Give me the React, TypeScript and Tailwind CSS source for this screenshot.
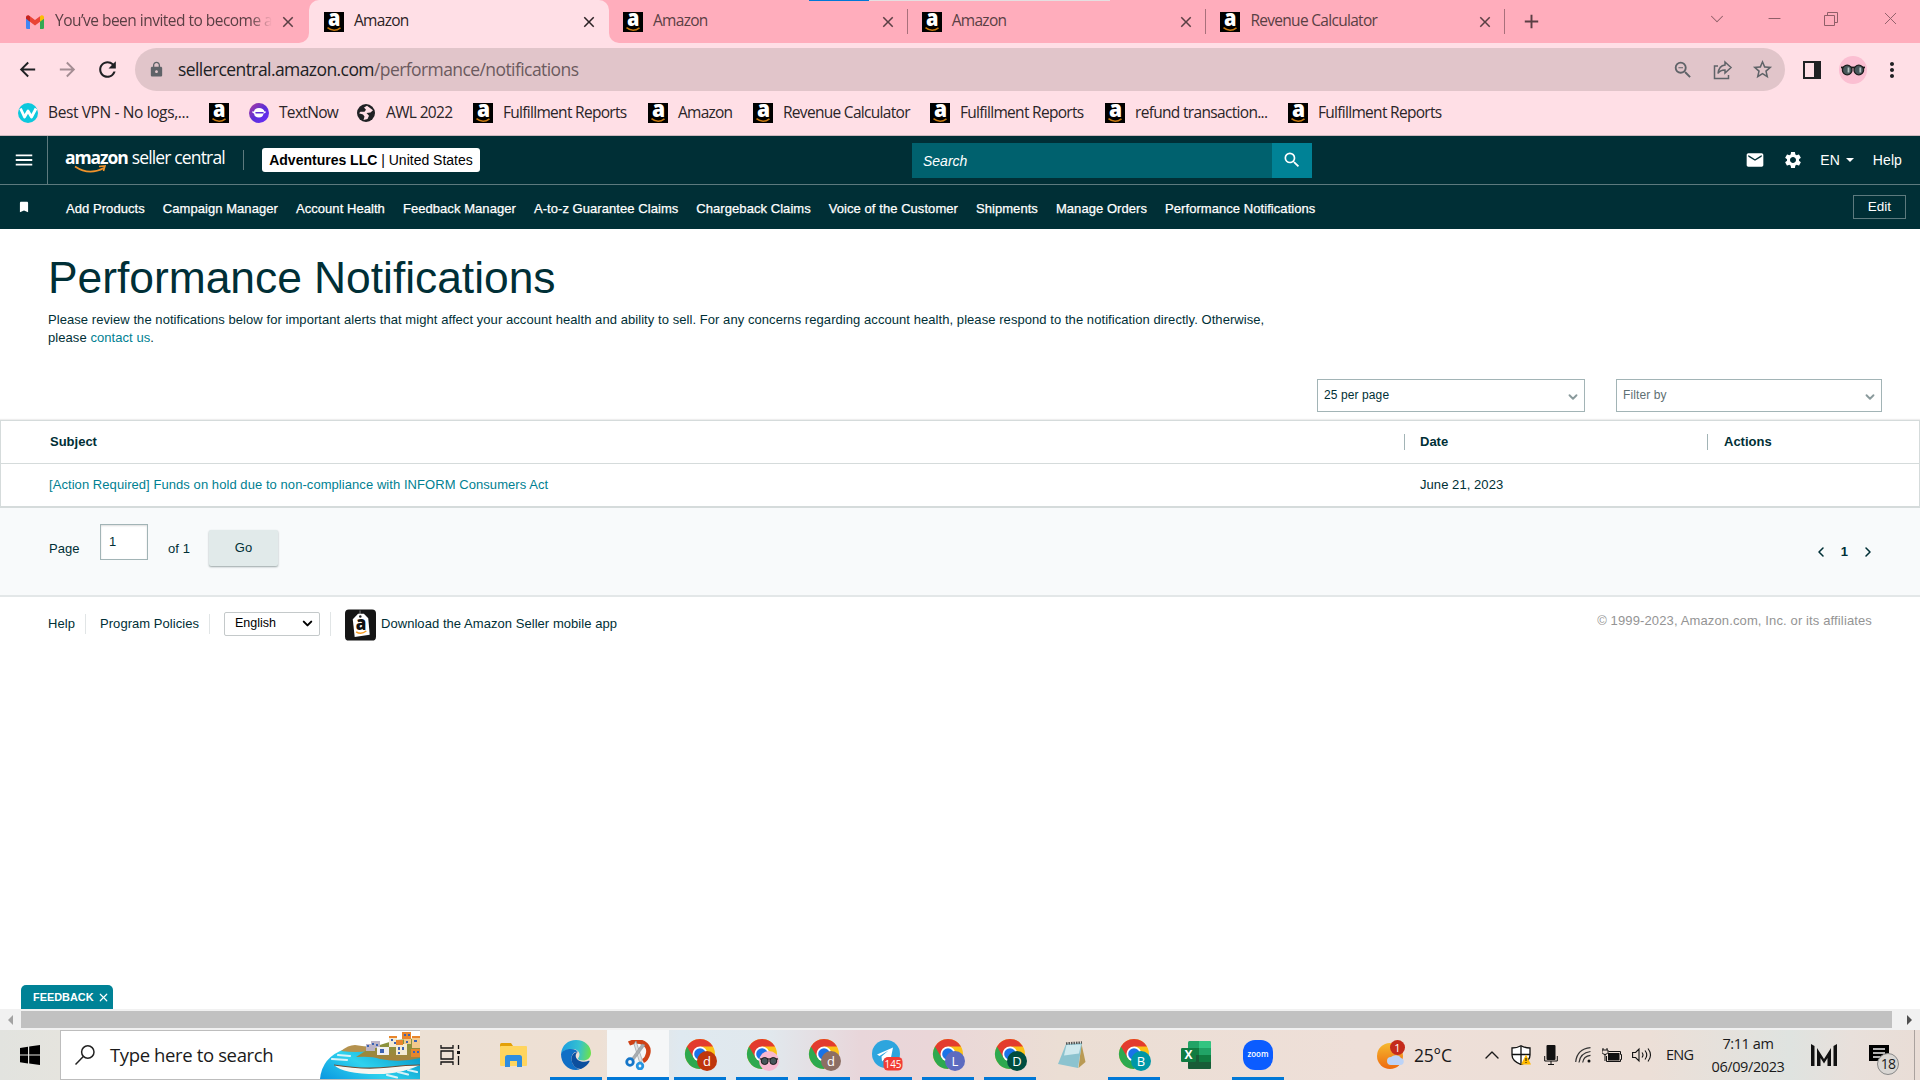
import React from 'react';
import {
  MdArrowBack, MdArrowForward, MdRefresh, MdLock, MdZoomOut, MdStarBorder,
  MdClose, MdAdd, MdMoreVert, MdMail, MdSettings, MdBookmark, MdMenu, MdSearch,
} from 'react-icons/md';
import { ChevronDown, ChevronLeft, ChevronRight, ChevronUp, Minus, X } from 'lucide-react';

const AmazonIcon = () => (
  <svg viewBox="0 0 20 20" className="size-5 shrink-0">
    <rect width="20" height="20" fill="#000" />
    <text x="4" y="14.300" fontFamily="Open Sans" fontWeight="800" fontSize="23" textLength="12.500" lengthAdjust="spacingAndGlyphs" fill="#fff">a</text>
    <path d="M3.500 15.700Q10 20.800 16.500 15.800" fill="none" stroke="#c87a12" strokeWidth="1.600" />
  </svg>
);

const GmailIcon = () => (
  <svg viewBox="0 0 18 14" className="w-[18px] h-[14px] shrink-0">
    <path d="M0 2v10.700a1.300 1.300 0 0 0 1.300 1.300H4V6z" fill="#4285f4" />
    <path d="M18 2v10.700a1.300 1.300 0 0 1-1.300 1.300H14V6z" fill="#34a853" />
    <path d="M4 1.200v5.500l5 3.700 5-3.700V1.200L9 5z" fill="#ea4335" />
    <path d="M0 2.200V3.700l4 3V1.200L3.300.7C1.900-.4 0 .5 0 2.200z" fill="#c5221f" />
    <path d="M18 2.200V3.700l-4 3V1.200l.7-.5C16.100-.4 18 .5 18 2.200z" fill="#fbbc04" />
  </svg>
);

const WindscribeIcon = () => (
  <svg viewBox="0 0 20 20" className="size-5 shrink-0">
    <circle cx="10" cy="10" r="10" fill="#0cc8dd" />
    <path d="M2.500 5.500l4 8.500L10 8l3.500 6L18 5.500" fill="none" stroke="#fff" strokeWidth="2.800" strokeLinejoin="round" />
  </svg>
);

const TextNowIcon = () => (
  <svg viewBox="0 0 20 20" className="size-5 shrink-0">
    <defs>
      <linearGradient id="tn" x1="0" y1="0" x2="1" y2="1">
        <stop offset="0" stopColor="#b03a9a" />
        <stop offset=".5" stopColor="#5c2fd6" />
        <stop offset="1" stopColor="#6a2cff" />
      </linearGradient>
    </defs>
    <circle cx="10" cy="10" r="10" fill="url(#tn)" />
    <path d="M5 8.500q.5-3.500 5-3.500t5.500 3.500H17q0 2-2.500 2-.5 4-4.500 4-4.500 0-5-4Q3 10 3 8.500z" fill="#fff" />
    <path d="M7 9.800h7" stroke="#5c2fd6" strokeWidth="1.500" strokeLinecap="round" />
  </svg>
);

const GlobeIcon = () => (
  <svg viewBox="0 0 18 18" className="size-[18px] mx-px shrink-0">
    <circle cx="9" cy="9" r="9" fill="#202124" />
    <path d="M10 1.800l-3 1.700 2 2.200-1.500 2H3.500L2 9.200l4 1.300 1.500 2-1 3.500 4-1 1.500-3.200L9.500 9l4-.6 2.500-2.200z" fill="#ffdfe6" />
  </svg>
);

const tabs = ['Amazon', 'Amazon', 'Revenue Calculator'];

const TabStrip = () => (
  <div className="relative h-[43px] bg-[#ffdfe6]">
    <div className="h-[43px] flex items-center text-[15.5px] text-[#5a3f44]">
      <div className="w-[309px] h-[43px] pl-[26px] pr-[12px] flex items-center shrink-0 bg-[#ffadbc] rounded-br-[10px]">
        <GmailIcon />
        <span className="ml-[11px] pb-px w-[219px] overflow-hidden whitespace-nowrap tracking-[-0.520px] [mask-image:linear-gradient(to_right,black_90%,transparent)]">
          You’ve been invited to become an
        </span>
        <MdClose size={18} className="ml-[7px] shrink-0" />
      </div>
      <div className="h-[43px] bg-[#ffadbc] shrink-0">
        <div className="w-[300px] h-[43px] pl-[15px] flex items-center bg-[#ffdfe6] rounded-t-[10px] text-[#2b2225]">
          <AmazonIcon />
          <span className="ml-[10px] pb-px flex-1 tracking-[-0.700px]">Amazon</span>
          <MdClose size={18} className="mr-[11px]" />
        </div>
      </div>
      <div className="flex-1 h-[43px] bg-[#ffadbc] rounded-bl-[10px] flex items-center">
        {tabs.map((title, i) => (
          <div key={i} className="w-[298.700px] h-[43px] pl-[14px] flex items-center shrink-0">
            <AmazonIcon />
            <span className="ml-[10px] pb-px flex-1 tracking-[-0.700px]">{title}</span>
            <MdClose size={18} className="mr-[10px]" />
            <div className="w-px h-[25px] bg-[#a8707b]" />
          </div>
        ))}
        <MdAdd size={23} className="ml-[15px]" />
        <div className="ml-auto flex items-center pr-[19px] pb-[6px] text-[#8f5f68]">
          <ChevronDown size={22} strokeWidth={1.100} className="mr-[37px]" />
          <Minus size={19} strokeWidth={1.300} className="mr-[40px]" />
          <svg viewBox="0 0 14 14" className="w-[14px] h-[14px] mr-[42px]" fill="none" stroke="currentColor">
            <path d="M.5 3.500h10v10H.5zM3.500 3.500V.5h10v10h-3" />
          </svg>
          <X size={21} strokeWidth={1.100} />
        </div>
      </div>
    </div>
    <div className="absolute top-0 left-[809px] w-[301px] h-px bg-[#e5dfe1] flex">
      <div className="w-[60px] h-px bg-[#0078d7]" />
    </div>
  </div>
);

const Sunglasses = () => (
  <svg viewBox="0 0 28 28" className="size-7">
    <circle cx="14" cy="14" r="14" fill="#fbbfd2" />
    <path d="M2 11.500h24" stroke="#1c1c1c" strokeWidth="1.800" />
    <circle cx="8.200" cy="14" r="4.800" fill="#47565a" stroke="#1c1c1c" strokeWidth="1.300" />
    <circle cx="19.800" cy="14" r="4.800" fill="#47565a" stroke="#1c1c1c" strokeWidth="1.300" />
    <path d="M9.500 11.500v5M21.300 11.500v5" fill="none" stroke="#b8c2c2" strokeWidth="1.800" />
  </svg>
);

const Toolbar = () => (
  <div className="h-[53px] bg-[#ffdfe6] flex items-center text-[#202124]">
    <MdArrowBack size={23} className="ml-[16px] shrink-0" />
    <MdArrowForward size={23} className="ml-[17px] shrink-0 text-[#a48d93]" />
    <MdRefresh size={25} className="ml-[16px] shrink-0" />
    <div className="ml-[15px] w-[1650px] h-[43px] rounded-full bg-[#e1c5ca] flex items-center shrink-0 text-[#5f6368]">
      <MdLock size={17} className="ml-[13px] shrink-0" />
      <span className="ml-[13px] pb-px flex-1 text-[17.5px] tracking-[-0.580px] text-[#6b5a5e]">
        <span className="text-[#202124]">sellercentral.amazon.com</span>/performance/notifications
      </span>
      <MdZoomOut size={22} />
      <svg viewBox="0 0 20 20" className="ml-[19px] size-5" fill="none" stroke="currentColor" strokeWidth="1.500">
        <path d="M5 6H1.500v12.500h14V15M12 2l6 5.500-6 5.500V10q-5 0-7 3.500Q6 5.500 12 5z" />
      </svg>
      <MdStarBorder size={23} className="ml-[18px] mr-[11px]" />
    </div>
    <div className="ml-[18px] w-[18px] h-[18px] border-2 border-r-[7px] border-[#202124]" />
    <div className="ml-[18px]"><Sunglasses /></div>
    <MdMoreVert size={24} className="ml-[13px]" />
  </div>
);

const bookmarks = [
  { icon: <WindscribeIcon />, label: 'Best VPN - No logs,...', box: 'w-[191px] tracking-[-0.380px]' },
  { icon: <AmazonIcon />, label: '', box: 'w-[40px]' },
  { icon: <TextNowIcon />, label: 'TextNow', box: 'w-[107px] tracking-[-0.680px]' },
  { icon: <GlobeIcon />, label: 'AWL 2022', box: 'w-[117px] tracking-[-0.650px]' },
  { icon: <AmazonIcon />, label: 'Fulfillment Reports', box: 'w-[175px] tracking-[-0.700px]' },
  { icon: <AmazonIcon />, label: 'Amazon', box: 'w-[105px] tracking-[-0.750px]' },
  { icon: <AmazonIcon />, label: 'Revenue Calculator', box: 'w-[177px] tracking-[-0.700px]' },
  { icon: <AmazonIcon />, label: 'Fulfillment Reports', box: 'w-[175px] tracking-[-0.700px]' },
  { icon: <AmazonIcon />, label: 'refund transaction...', box: 'w-[183px] tracking-[-0.680px]' },
  { icon: <AmazonIcon />, label: 'Fulfillment Reports', box: 'w-[175px] tracking-[-0.700px]' },
];

const BookmarksBar = () => (
  <div className="h-[40px] pb-[6px] pt-px pl-[18px] bg-[#ffdfe6] border-b border-[#cfb9be] flex items-center text-[15.5px] text-[#2b2528]">
    {bookmarks.map((b, i) => (
      <div key={i} className={`${b.box} flex items-center shrink-0 whitespace-nowrap`}>
        {b.icon}
        <span className="ml-[10px]">{b.label}</span>
      </div>
    ))}
  </div>
);

const navLinks = [
  'Add Products', 'Campaign Manager', 'Account Health', 'Feedback Manager', 'A-to-z Guarantee Claims',
  'Chargeback Claims', 'Voice of the Customer', 'Shipments', 'Manage Orders', 'Performance Notifications',
];

const SellerHeader = () => (
  <header className="bg-[#002f36] text-white">
    <div className="h-[49px] flex items-center border-b border-[#5d7a7e]">
      <div className="w-[48px] h-[48px] flex items-center justify-center border-r border-[#5d7a7e]">
        <MdMenu size={22} />
      </div>
      <div className="ml-[17px] w-[161px] h-[30px] relative">
        <div className="flex items-baseline whitespace-nowrap text-[17.500px] leading-[24px] font-['Open_Sans',sans-serif]">
          <span className="font-bold tracking-[-1.080px]">amazon</span>
          <span className="ml-[4px] tracking-[-0.850px]">seller central</span>
        </div>
        <svg viewBox="0 0 34 9" className="absolute left-[9px] top-[20px] w-[34px] h-[9px]" fill="none" stroke="#f0932b" strokeWidth="1.600">
          <path d="M1 1.500Q15 11 30 3M25 1.500l6-.5-1.500 5" />
        </svg>
      </div>
      <div className="ml-[17px] w-px h-[20px] bg-[#5d7a7e]" />
      <div className="ml-[18px] w-[218px] h-[24px] rounded-[3px] bg-white text-black text-[14px] leading-[24px] text-center whitespace-nowrap">
        <b>Adventures LLC</b> | United States
      </div>
      <div className="ml-[432px] w-[360px] h-[35px] bg-[#00616e] pl-[11px] pt-[2px] flex items-center text-[14px] italic">Search</div>
      <div className="w-[40px] h-[35px] bg-[#008296] flex items-center justify-center">
        <MdSearch size={20} />
      </div>
      <MdMail size={20} className="ml-auto" />
      <MdSettings size={20} className="ml-[18px]" />
      <span className="ml-[17px] pt-px text-[14px]">EN</span>
      <span className="ml-[6px] border-x-[4.5px] border-x-transparent border-t-[4.5px] border-t-white" />
      <span className="ml-[19px] mr-[18px] pt-px text-[14px] tracking-[0.100px]">Help</span>
    </div>
    <div className="h-[44px] flex items-center">
      <MdBookmark size={14} className="ml-[17px]" />
      <nav className="ml-[35px] pt-[3px] flex gap-[18px] text-[13px] tracking-[0.060px] [-webkit-text-stroke:0.250px_white] whitespace-nowrap">
        {navLinks.map((l) => <a key={l}>{l}</a>)}
      </nav>
      <button className="ml-auto mr-[14px] w-[53px] h-[24px] border border-[#5d7a7e] text-[13.5px] leading-[20px]">Edit</button>
    </div>
  </header>
);

const Dropdown = ({ label, className }: { label: string; className: string }) => (
  <div className={`h-[33px] border border-[#a2b4b6] bg-white flex items-center justify-between pl-[6px] pr-[4px] text-[12px] tracking-[0.100px] ${className}`}>
    <span className="pb-[2px]">{label}</span>
    <ChevronDown size={14} strokeWidth={3.200} className="mt-[3px] text-[#8a9a9c]" />
  </div>
);

const Notifications = () => (
  <main className="h-[367px] text-[#002f36] tracking-[0.063px]">
    <h1 className="pl-[48px] pt-[21px] text-[44.400px] leading-[56px] tracking-[-0.030px]">Performance Notifications</h1>
    <p className="pl-[48px] pt-[5px] text-[13px] leading-[18px] whitespace-nowrap">
      Please review the notifications below for important alerts that might affect your account health and ability to sell. For any concerns regarding account health, please respond to the notification directly. Otherwise,<br />
      please <a className="text-[#007f92]">contact us</a>.
    </p>
    <div className="mt-[32px] flex">
      <Dropdown label="25 per page" className="ml-[1317px] w-[268px]" />
      <Dropdown label="Filter by" className="ml-[31px] w-[266px] text-[#5e7073]" />
    </div>
    <div className="mt-[8px] border border-b-2 border-[#d5dbdb] text-[13px] shadow-[0_-1px_1px_#eee]">
      <div className="h-[43px] flex items-center border-b border-[#d5dbdb] font-bold tracking-normal">
        <div className="w-[1403px] pl-[49px]">Subject</div>
        <div className="w-[303px] h-[16px] leading-[16px] pl-[15px] border-l border-[#a2b4b6]">Date</div>
        <div className="h-[16px] leading-[16px] pl-[16px] border-l border-[#a2b4b6]">Actions</div>
      </div>
      <div className="h-[42px] flex items-center">
        <a className="w-[1419px] pl-[48px] text-[#007f92]">[Action Required] Funds on hold due to non-compliance with INFORM Consumers Act</a>
        <span>June 21, 2023</span>
      </div>
    </div>
    <div className="h-[89px] bg-[#f8fafb] border-b-2 border-[#e3e7e8] flex items-start text-[13px]">
      <span className="ml-[49px] mt-[31px] w-[51px]">Page</span>
      <div className="mt-[16px] w-[48px] h-[36px] border border-[#a2b4b6] bg-white pl-[8px] leading-[33px] shadow-[inset_0_1px_2px_#ddd]">1</div>
      <span className="ml-[20px] mt-[31px] w-[41px]">of 1</span>
      <button className="mt-[22px] w-[69px] h-[36px] rounded-[2px] bg-[#e1eaea] pb-px shadow-[0_1px_2px_#9aa5a6]">Go</button>
      <div className="ml-auto mr-[44px] mt-[34px] flex items-center gap-[12px] font-bold">
        <ChevronLeft size={16} strokeWidth={2.300} />
        <span>1</span>
        <ChevronRight size={16} strokeWidth={2.300} />
      </div>
    </div>
  </main>
);

const SellerAppIcon = () => (
  <svg viewBox="0 0 32 32" className="w-[31px] h-[32px]">
    <rect width="32" height="32" rx="4" fill="#151515" />
    <path d="M15.500 1v5" stroke="#888" />
    <path d="M8 10l5.500-5.500h6L24 9l1.500 17L10 28.500z" fill="#fff" />
    <circle cx="15.800" cy="7.200" r="1.300" fill="#222" />
    <text x="11" y="21" fontFamily="Open Sans" fontWeight="800" fontSize="20" textLength="11" lengthAdjust="spacingAndGlyphs" fill="#111">a</text>
    <path d="M11.500 23q5 3.500 10.500-.8" fill="none" stroke="#f59b22" strokeWidth="1.500" />
  </svg>
);

const Footer = () => (
  <footer className="h-[54px] pt-px flex items-center text-[13px] tracking-[0.050px] text-[#002f36]">
    <span className="ml-[48px] w-[37px]">Help</span>
    <div className="w-px h-[20px] bg-[#e1e5e6]" />
    <span className="ml-[14px] w-[109px]">Program Policies</span>
    <div className="w-px h-[20px] bg-[#e1e5e6]" />
    <div className="ml-[14px] w-[96px] h-[24px] rounded-[2px] border border-[#c4c9ca] flex items-center justify-between pl-[10px] pr-[4px] text-[12.5px] tracking-normal text-black">
      English
      <ChevronDown size={15} strokeWidth={3.200} />
    </div>
    <div className="ml-[10px] w-px h-[24px] bg-[#e1e5e6]" />
    <div className="ml-[14px] mt-[3px]"><SellerAppIcon /></div>
    <span className="ml-[5px]">Download the Amazon Seller mobile app</span>
    <span className="ml-auto mr-[48px] pb-[5px] tracking-[0.130px] text-[#949494]">© 1999-2023, Amazon.com, Inc. or its affiliates</span>
  </footer>
);

const ChromeIcon = ({ badge, color }: { badge: string; color: string }) => (
  <svg viewBox="0 0 32 32" className="ml-[2px] size-8 overflow-visible">
    <circle cx="15" cy="15" r="15" fill="#fbc116" />
    <path d="M15 15L2 7.500A15 15 0 0 0 15 30L21.500 18.700z" fill="#2da94f" />
    <path d="M15 7.500h13A15 15 0 0 0 2 7.500l6.500 11.200z" fill="#e33b2e" />
    <circle cx="15" cy="15" r="7.500" fill="#fff" />
    <circle cx="15" cy="15" r="5.800" fill="#1a73e8" />
    <circle cx="22" cy="22" r="10" fill={color} />
    {badge ? (
      <text x="22" y="26.800" textAnchor="middle" fontFamily="Open Sans" fontSize="13" fill="#fff">{badge}</text>
    ) : (
      <>
        <path d="M13 20h18" stroke="#222" strokeWidth="1.300" />
        <circle cx="17.700" cy="22" r="3.500" fill="#47565a" stroke="#1c1c1c" />
        <circle cx="26.300" cy="22" r="3.500" fill="#47565a" stroke="#1c1c1c" />
      </>
    )}
  </svg>
);

const EdgeIcon = () => (
  <svg viewBox="0 0 30 30" className="size-[30px]">
    <defs>
      <linearGradient id="edge" x1="0" y1=".3" x2="1" y2=".4">
        <stop offset="0" stopColor="#1b9de2" />
        <stop offset=".6" stopColor="#35c1d0" />
        <stop offset="1" stopColor="#6be04f" />
      </linearGradient>
    </defs>
    <path d="M0 14C1 5 7 0 15 0c9 0 15 6 15 13 0 5-4 7.500-8 7.500-3 0-5-1-5-2 0-.8 1.500-1.500 1.500-4C18.500 11 15 9 11 9 5 9 1 12 0 14z" fill="url(#edge)" />
    <path d="M0 14C1 11 5 9 10 9c4 0 6 1.500 7 3-3-1-6.500 2-6.500 6.500C10.500 24 14 28 19 29.500 8 32 0 24 0 14z" fill="#0f6fc6" />
    <path d="M17 12c-4 0-6.500 3-6.500 7 0 5 4 10 9.500 10 4-1.500 7-4.500 8.500-7.500.3-.7-.3-1-.8-.7-2 1-4 1.200-6 1-4-.4-7-3-7-6 0-1.700 1-3.200 2.300-3.800z" fill="#0c4f9e" />
  </svg>
);

const SnipIcon = () => (
  <svg viewBox="0 0 28 30" className="ml-[2px] w-[28px] h-[30px]">
    <path d="M4 3.500Q12-.5 18.500 3q6.500 4 4.500 11-1.500 5.500-5 7" fill="none" stroke="#cf4216" strokeWidth="4.500" />
    <path d="M11 1l6.500 20-3 1L9 4z" fill="#dfe2e4" stroke="#8c9296" strokeWidth=".6" />
    <path d="M20 5L9 20l-2-2L17 4z" fill="#a8adb1" stroke="#8c9296" strokeWidth=".5" />
    <circle cx="5" cy="22" r="3.300" fill="none" stroke="#1576c8" strokeWidth="2.800" />
    <circle cx="15" cy="26" r="2.800" fill="none" stroke="#2795e0" strokeWidth="2.800" />
  </svg>
);

const TelegramIcon = () => (
  <svg viewBox="0 0 32 32" className="ml-[2px] size-8 overflow-visible">
    <circle cx="15" cy="15" r="14" fill="#2da5de" />
    <path d="M6 15.500L22 8.500l-3 15-5-4-3 3-.5-5 7-6-9 5.500z" fill="#fff" />
    <rect x="12.500" y="18" width="19" height="13.500" rx="4.500" fill="#f23c34" />
    <text x="13.500" y="28.800" fontFamily="Open Sans" fontSize="11.500" textLength="17" lengthAdjust="spacingAndGlyphs" fill="#fff">145</text>
  </svg>
);

const NotepadIcon = () => (
  <svg viewBox="0 0 30 28" className="w-[30px] h-[28px]">
    <path d="M24.500 3l4 18-7 6z" fill="#b99a54" />
    <path d="M9 3l16-1-4 25-20-4z" fill="#8cc3cf" />
    <path d="M9.500 4l14.500-.5-2 9-15 2z" fill="#cfe9ee" />
    <path d="M9 2.500l16-1" stroke="#555" strokeWidth="2.500" strokeDasharray="1.500 1" />
  </svg>
);

const ExcelIcon = () => (
  <svg viewBox="0 0 30 28" className="w-[30px] h-[28px]">
    <rect x="7" width="23" height="28" rx="1.500" fill="#21a366" />
    <path d="M18 0h10.500A1.500 1.500 0 0 1 30 1.500V7H18z" fill="#33c481" />
    <path d="M7 7h11v14H7z" fill="#107c41" />
    <path d="M7 14h11v14H8.500A1.500 1.500 0 0 1 7 26.500z" fill="#185c37" />
    <path d="M18 14h12v7H18z" fill="#107c41" />
    <path d="M18 21h12v5.500a1.500 1.500 0 0 1-1.500 1.500H18z" fill="#185c37" />
    <rect y="7" width="15" height="14" rx="1.300" fill="#107c41" />
    <text x="7.500" y="18.300" textAnchor="middle" fontFamily="Open Sans" fontWeight="700" fontSize="12" fill="#fff">X</text>
  </svg>
);

const ZoomIcon = () => (
  <svg viewBox="0 0 30 30" className="size-[30px]">
    <rect width="30" height="30" rx="12" fill="#0b5cff" />
    <text x="4.500" y="17.300" fontFamily="Open Sans" fontWeight="600" fontSize="9" textLength="21" lengthAdjust="spacingAndGlyphs" fill="#fff">zoom</text>
  </svg>
);

const apps = [
  { icon: <EdgeIcon />, open: true },
  { icon: <SnipIcon />, open: true, active: true },
  { icon: <ChromeIcon badge="d" color="#bf360c" />, open: true },
  { icon: <ChromeIcon badge="" color="#f9b8d0" />, open: true },
  { icon: <ChromeIcon badge="d" color="#8d6e63" />, open: true },
  { icon: <TelegramIcon />, open: true },
  { icon: <ChromeIcon badge="L" color="#5c6bc0" />, open: true },
  { icon: <ChromeIcon badge="D" color="#004d40" />, open: true },
  { icon: <NotepadIcon />, open: false },
  { icon: <ChromeIcon badge="B" color="#0097a7" />, open: true },
  { icon: <ExcelIcon />, open: false },
  { icon: <ZoomIcon />, open: true },
];

const SeaTown = () => (
  <svg viewBox="0 0 100 48" preserveAspectRatio="none" className="w-[100px] h-[48px] shrink-0">
    <defs>
      <linearGradient id="sea" x1="0" y1="1" x2="1" y2=".4">
        <stop offset="0" stopColor="#0a96e0" />
        <stop offset=".5" stopColor="#2ed2ee" />
        <stop offset="1" stopColor="#0a9ccc" />
      </linearGradient>
      <linearGradient id="hill" x1="0" y1="0" x2="0" y2="1">
        <stop offset="0" stopColor="#7f9a3c" />
        <stop offset="1" stopColor="#a8803c" />
      </linearGradient>
    </defs>
    <path d="M0 48Q2 26 25 18L60 14h40v34z" fill="url(#sea)" />
    <path d="M21 20q7-6 14-6l14 2v4q-12 2-28 0z" fill="#b5924e" />
    <path d="M36 26l14-9 26-8 24-2v20q-20 5-40 1-8-3-24-2z" fill="url(#hill)" />
    <path d="M46 13h5v-3h9v7h-5v3h-9z" fill="#bdb5c6" />
    <path d="M57 16h12v8H57z" fill="#f1f0ee" />
    <path d="M69 5h8v11h-8zM76 13h11v11H76z" fill="#f4ead2" />
    <path d="M82 1h9v7h-9zM69 5h8v2h-8zM76 9h7v5h-7zM91 18h9v8h-9zM92 5h8v2h-8z" fill="#e8862c" />
    <path d="M92 7h8v10h-8zM84 8h7v5h-7z" fill="#f3c98c" />
    <path d="M47 14h2v2h-2zM52 12h2v2h-2zM56 13h2v2h-2zM60 18h4v4h-4zM71 8h2v2h-2zM74 11h2v2h-2zM78 16h2v3h-2zM82 16h2v3h-2zM78 21h2v2h-2zM84 3h2v2h-2zM88 3h2v2h-2zM94 9h3v2h-3zM93 20h2v2h-2zM97 20h2v2h-2zM86 10h2v2h-2z" fill="#3c63b4" />
    <path d="M14 34q30 5 56 2 16-2 30-2-14 7-36 9-40 1-50-9z" fill="#f8f6f0" />
    <path d="M14 34q30 5 56 2 16-2 30-2" fill="none" stroke="#6d4b34" strokeWidth="1.200" />
    <path d="M67 44l10 2.500M78 41l10 2.500M88 39l9 2M12 28l15 1M18 24l12 1" stroke="#d8f2f8" strokeWidth="2.200" strokeLinecap="round" />
  </svg>
);

const Taskbar = () => (
  <div className="h-[50px] flex items-center font-['Open_Sans','Noto_Sans',sans-serif] text-[#1a1a1a] bg-[linear-gradient(to_right,#e2e3df_0px,#e5e4de_60px,#ece0d4_430px,#eee0d4_600px,#dfe9f0_680px,#e1e8ed_770px,#e8d6da_860px,#ead6d8_930px,#ebded4_1060px,#eedfd8_1360px,#ecdfd7_1650px,#dfe3e0_1790px,#e8e0db_1850px,#e9ddd6_1920px)]">
    <div className="w-[60px] flex justify-center">
      <svg viewBox="0 0 20 20" className="size-5"><path d="M0 3l8-1.200V9.500H0zM9.200 1.600L20 0v9.500H9.200zM0 10.600h8v7.800L0 17.200zM9.200 10.600H20V20L9.200 18.500z" /></svg>
    </div>
    <div className="w-[360px] h-[50px] bg-white border border-r-0 border-[#bdbdbd] flex items-center">
      <svg viewBox="0 0 20 20" className="ml-[14px] size-5" fill="none" stroke="#222" strokeWidth="1.500"><circle cx="12.800" cy="7" r="6.200" /><path d="M8.300 11.500L.5 19.500" /></svg>
      <span className="ml-[15px] flex-1 text-[18.500px] tracking-[-0.370px] whitespace-nowrap">Type here to search</span>
      <SeaTown />
    </div>
    <div className="w-[59px] flex justify-center">
      <svg viewBox="0 0 20 20" className="size-5" fill="none" stroke="#111" strokeWidth="1.300"><path d="M1 0v3h12V0M1 20v-3h12v3M1 6h12v8H1zM18.500 0v4M18.500 11v9" /><path d="M17 6h3v3h-3z" fill="#111" stroke="none" /></svg>
    </div>
    <div className="w-[66px] flex justify-center">
      <svg viewBox="0 0 27 24" className="ml-[2px] w-[27px] h-[24px]">
        <path d="M0 1.500Q0 0 1.500 0H11l2 3v3H0z" fill="#e3a008" />
        <rect y="3" width="27" height="20" rx="1" fill="#ffd55e" />
        <path d="M5 24v-9.500Q5 12 7.500 12h12q2.500 0 2.500 2.500V24h-5v-6h-7v6z" fill="#2f8de0" />
      </svg>
    </div>
    <div className="flex">
      {apps.map((a, i) => (
        <div key={i} className={`relative w-[62px] h-[50px] flex items-center justify-center ${a.active ? 'bg-[#f5f7f8]' : ''}`}>
          {a.icon}
          {a.open && <div className={`absolute bottom-0 h-[3px] bg-[#0078d7] ${a.active ? 'inset-x-0' : 'inset-x-[5px]'}`} />}
        </div>
      ))}
    </div>
    <svg viewBox="0 0 28 30" className="ml-[88px] w-[28px] h-[30px] shrink-0">
      <defs>
        <linearGradient id="sun" x1="0" y1="0" x2="0" y2="1">
          <stop offset="0" stopColor="#f5b92e" />
          <stop offset="1" stopColor="#ee6a10" />
        </linearGradient>
      </defs>
      <circle cx="13" cy="16" r="13" fill="url(#sun)" />
      <path d="M14 25a4 4 0 0 1 0-8 6 5 0 0 1 10 1 3.600 3.600 0 0 1 0 7z" fill="#bcd3f7" />
      <circle cx="20.500" cy="7.500" r="7.500" fill="#c42b1c" />
      <text x="20.500" y="11.500" textAnchor="middle" fontFamily="Open Sans" fontSize="11" fill="#fff">1</text>
    </svg>
    <span className="ml-[9px] w-[38px] text-[17.500px] tracking-[-0.200px] whitespace-nowrap">25°C</span>
    <ChevronUp size={24} strokeWidth={1.400} className="ml-[28px] shrink-0" />
    <svg viewBox="0 0 20 20" className="ml-[7px] size-5 shrink-0">
      <path d="M10 .7Q14 3 19 3v7q0 6-9 9.500Q1 16 1 10V3q5 0 9-2.300z" fill="#fff" stroke="#111" strokeWidth="1.300" />
      <path d="M10 1v18M1 9.500h18" stroke="#111" strokeWidth="1.300" />
      <path d="M15 9.500l5 10H10z" fill="#ffb900" />
      <path d="M15 13v3M15 17v1" stroke="#111" />
    </svg>
    <svg viewBox="0 0 14 20" className="ml-[13px] w-[14px] h-[20px] shrink-0" fill="none" stroke="#111">
      <rect x="2.500" y="0" width="9" height="15" rx="1" fill="#111" stroke="none" />
      <path d="M.7 11v5h12.600v-5M7 16v3.500M4 19.500h6" />
    </svg>
    <svg viewBox="0 0 16 16" className="ml-[17px] size-4 shrink-0" fill="none" stroke="#333" strokeWidth="1.200">
      <path d="M.7 15Q2 2 15.500 .7M4 15.500Q5 6 15.500 4.500M7.700 15.500Q8.500 9 15.500 8.300" />
      <circle cx="14" cy="14" r="1.500" fill="#111" stroke="none" />
    </svg>
    <svg viewBox="0 0 20 14" className="ml-[11px] w-[20px] h-[14px] shrink-0">
      <path d="M1 0v2M5 0v2M0 2h6v2.500q-1 2-3 2-2 0-3-2zM3 6v7" fill="none" stroke="#111" />
      <path d="M6 5h11.500v7.500H6z" fill="#111" />
      <path d="M6.500 3.500h12v3h1v5h-1v2h-14V8" fill="none" stroke="#111" />
    </svg>
    <svg viewBox="0 0 21 16" className="ml-[10px] w-[21px] h-[16px] shrink-0" fill="none" stroke="#111" strokeWidth="1.100">
      <path d="M.6 5.500h3L7 2v12l-3.400-3.500h-3zM10 5.500q2 2.500 0 5M13 3.500q3.500 4.500 0 9M16 1.500q5 6.500 0 13" />
    </svg>
    <span className="ml-[13px] w-[29px] text-[14.500px] tracking-[-0.700px]">ENG</span>
    <div className="ml-[14px] w-[78px] text-[14.500px] leading-[23px] tracking-[-0.400px] text-center whitespace-nowrap">
      7:11 am<br />06/09/2023
    </div>
    <svg viewBox="0 0 26 22" className="ml-[24px] w-[26px] h-[22px] shrink-0">
      <path d="M0 0l3.500 2v20H0zM6 4l7 11 7-11v18h-3.500V14L13 19.500 9.500 14v8H6zM26 0l-3.500 2v20H26z" fill="#111" />
    </svg>
    <div className="relative ml-[32px] shrink-0">
      <svg viewBox="0 0 20 20" className="w-[20px] h-[20px]">
        <path d="M0 0h20v16H14l-4 4v-4H0z" fill="#000" />
        <path d="M4 4h12M4 8h12M4 12h7" stroke="#eee" strokeWidth="1.300" />
      </svg>
      <div className="absolute left-[8px] top-[8px] size-[22px] rounded-full border border-[#888] bg-[#d9d6d3] text-[14px] leading-[20px] tracking-[-0.700px] text-center">18</div>
    </div>
    <div className="ml-auto mr-[5px] w-px h-[50px] bg-[#aaa29e]" />
  </div>
);

export default function App() {
  return (
    <div className="w-[1920px] h-[1080px] overflow-hidden bg-white flex flex-col font-['Liberation_Sans',Arial,sans-serif]">
      <div className="font-['Open_Sans','Noto_Sans',sans-serif]">
        <TabStrip />
        <Toolbar />
        <BookmarksBar />
      </div>
      <SellerHeader />
      <Notifications />
      <Footer />
      <div className="mt-auto ml-[21px] w-[92px] h-[24px] rounded-t-[5px] bg-[#008296] flex items-center pl-[12px] pt-px text-white text-[10.900px] font-bold">
        FEEDBACK
        <X size={13} strokeWidth={2.200} className="ml-[3px]" />
      </div>
      <div className="h-[21px] bg-[#f1f1f1] flex items-center">
        <span className="ml-[8px] mr-[8px] border-y-[5px] border-y-transparent border-r-[5px] border-r-[#a3a3a3]" />
        <div className="w-[1871px] h-[17px] bg-[#c1c1c1]" />
        <span className="ml-[15px] border-y-[5px] border-y-transparent border-l-[5px] border-l-[#505050]" />
      </div>
      <Taskbar />
    </div>
  );
}
